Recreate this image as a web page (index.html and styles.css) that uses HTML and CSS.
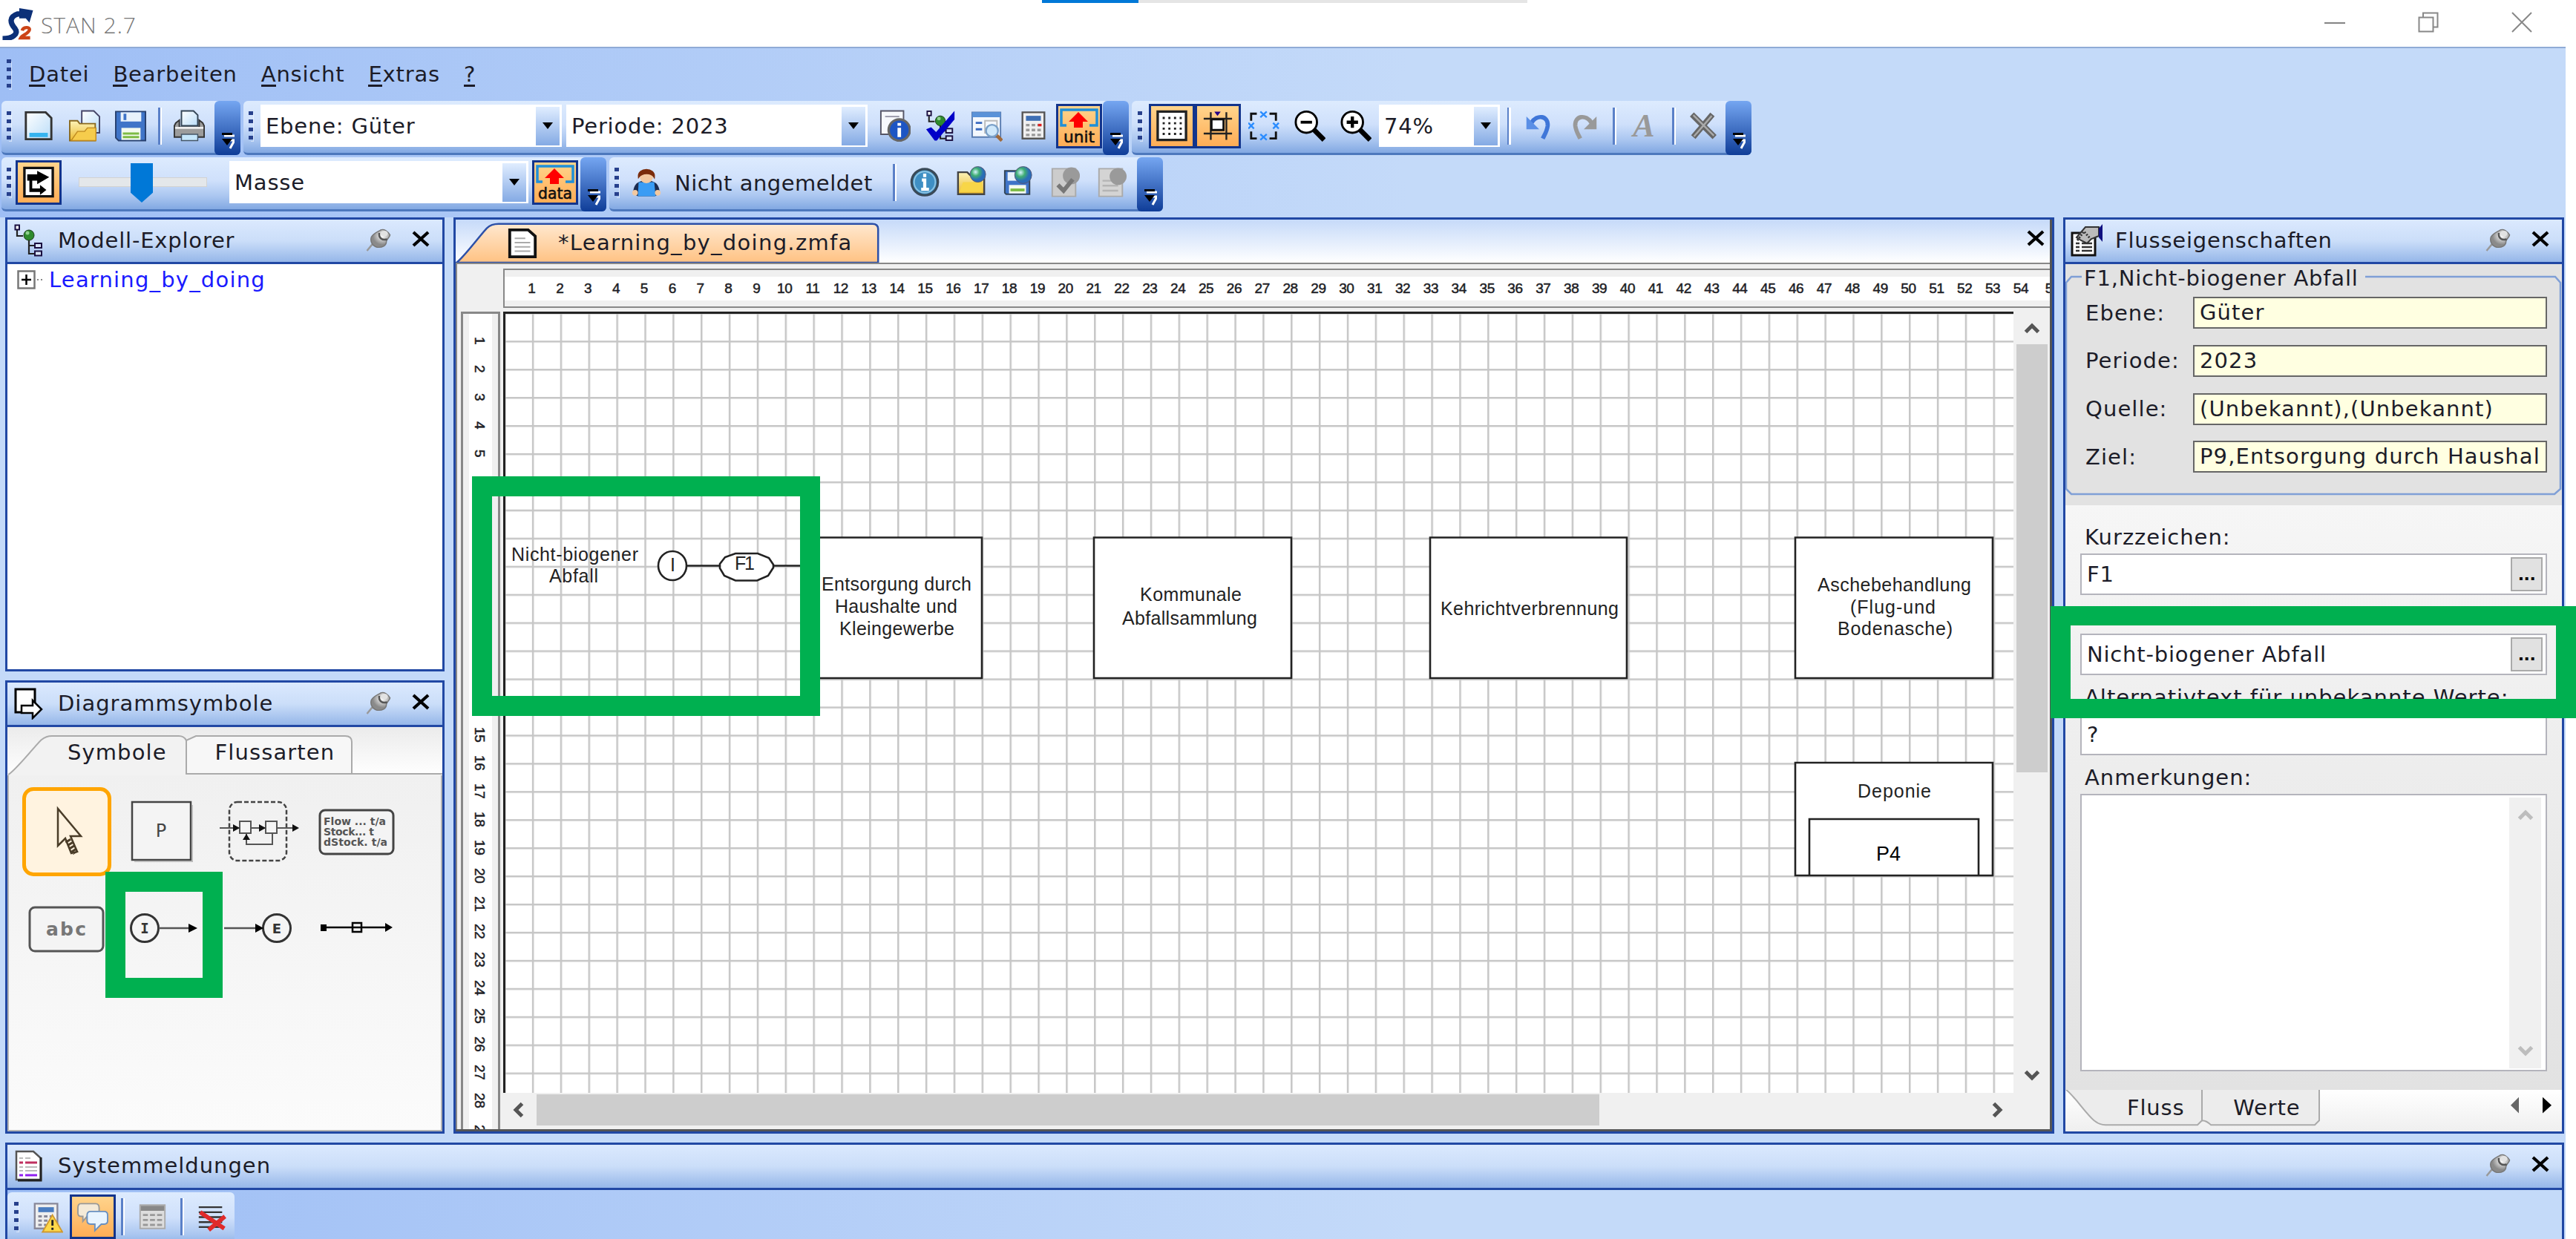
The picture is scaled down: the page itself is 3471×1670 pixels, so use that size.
FILE: index.html
```html
<!DOCTYPE html>
<html lang="de">
<head>
<meta charset="utf-8">
<title>STAN 2.7</title>
<link rel="stylesheet" href="styles.css">
</head>
<body>
<svg class="defs" width="0" height="0">
  <defs>
    <linearGradient id="paper" x1="0" y1="0" x2="1" y2="1"><stop offset="0" stop-color="#fff"/><stop offset="1" stop-color="#b9dcf8"/></linearGradient>
    <linearGradient id="gold" x1="0" y1="0" x2="0" y2="1"><stop offset="0" stop-color="#fdf3b8"/><stop offset="1" stop-color="#eab92c"/></linearGradient>
    <radialGradient id="globe" cx=".35" cy=".35"><stop offset="0" stop-color="#d5f3ff"/><stop offset=".5" stop-color="#3fae72"/><stop offset="1" stop-color="#2a6db8"/></radialGradient>
    <radialGradient id="silver" cx=".6" cy=".35"><stop offset="0" stop-color="#fff"/><stop offset="1" stop-color="#8a8a8a"/></radialGradient>
    <symbol id="pin" viewBox="0 0 34 32"><path d="M1 31L10 20" stroke="#999" stroke-width="2.500"/><path d="M7 12C10 6 18 4 20 2C25 0 30 4 33 9C32 13 29 14 28 18C28 24 22 27 15 26C9 25 5 18 7 12Z" fill="url(#silver)" stroke="#777" stroke-width="1.500"/><path d="M18 6C17 13 22 17 29 15" fill="none" stroke="#555" stroke-width="2.500"/><ellipse cx="25" cy="7" rx="5" ry="4" fill="#e2e2e2"/></symbol>
    <symbol id="close" viewBox="0 0 24 22"><path d="M2 2L22 20M22 2L2 20" stroke="#000" stroke-width="4.200"/></symbol>
    <symbol id="tree" viewBox="0 0 40 44"><path d="M4 8V16H12M20 20V40H28M20 29H28" fill="none" stroke="#222" stroke-width="2.200"/><rect x="1.500" y="1.500" width="5.500" height="6" fill="#fff" stroke="#1a0f40" stroke-width="2"/><circle cx="20" cy="15" r="7" fill="#2d8a2d" stroke="#1c3c1c"/><circle cx="18" cy="12" r="2.500" fill="#8fd08f"/><rect x="28" y="26" width="9" height="6" fill="#d8e4f8" stroke="#1a0f40" stroke-width="2"/><rect x="28" y="36.500" width="9" height="6" fill="#d8e4f8" stroke="#1a0f40" stroke-width="2"/></symbol>
    <symbol id="drop" viewBox="0 0 14 10"><path d="M0 0H14L7 9Z"/></symbol>
    <symbol id="over" viewBox="0 0 18 22"><path d="M4 4H18M8 10H18L12 21" fill="none" stroke="#fff" stroke-width="3"/><path d="M1 1.500H15" stroke="#000" stroke-width="3"/><path d="M1 8H15L8 17Z"/></symbol>
    <symbol id="chev" viewBox="0 0 22 18"><path d="M2.500 14.500L11 6L19.500 14.500" fill="none" stroke="currentColor" stroke-width="5"/></symbol>
  </defs>
</svg>

<div class="window">
  <header class="titlebar">
    <div class="progress"><i></i></div>
    <svg class="logo" viewBox="0 0 44 44"><path d="M1 42C14 42 24 36 18 28C11 20 10 12 22 8H26" fill="none" stroke="#0c3078" stroke-width="7.500"/><path d="M24 0L43 3L38 20L33 14L24 14Z" fill="#0c3078"/><path d="M28 31C29 26 39 25 38 30C37 35 28 37 26 41H39" fill="none" stroke="#cc4418" stroke-width="4.500"/></svg>
    <span class="app-name">STAN 2.7</span>
    <span class="spring"></span>
    <svg class="caption" viewBox="0 0 28 28"><path d="M0 15H28" stroke="#888" stroke-width="2.200"/></svg>
    <svg class="caption" viewBox="0 0 28 28"><path d="M1.500 7.500H20.500V26.500H1.500ZM7 7V1.500H26.500V20.500H21" fill="none" stroke="#888" stroke-width="2"/></svg>
    <svg class="caption last" viewBox="0 0 28 28"><path d="M1 1L27 27M27 1L1 27" stroke="#888" stroke-width="2"/></svg>
  </header>

  <div class="bars">
    <nav class="menu"><i class="grip"></i><span><u>D</u>atei</span><span><u>B</u>earbeiten</span><span><u>A</u>nsicht</span><span><u>E</u>xtras</span><span><u>?</u></span></nav>

    <div class="bar-row">
      <div class="bar b-file">
        <i class="grip"></i>
        <b class="slot"><svg viewBox="0 0 44 44"><path d="M4 3H32L40 11V41H4Z" fill="url(#paper)" stroke="#333" stroke-width="3"/><path d="M9 32H35V38H9Z" fill="#35b4f0"/></svg></b>
        <b class="slot"><svg viewBox="0 0 44 44"><path d="M18 1H35L43 9V32H18Z" fill="url(#paper)" stroke="#446" stroke-width="2"/><path d="M1 15H12L15 19H37V43H1Z" fill="url(#gold)" stroke="#8a6a20" stroke-width="2"/><path d="M3 43L12 30H22L26 25H38V43Z" fill="#f6cc4c" stroke="#c08a20" stroke-width="1.500"/></svg></b>
        <b class="slot"><svg viewBox="0 0 44 44"><path d="M1 2H43V43H5L1 39Z" fill="#3f74c8" stroke="#28406e" stroke-width="2"/><path d="M8 3H37V16H8Z" fill="#e9f2fb"/><path d="M14 5V14" stroke="#3f74c8" stroke-width="4"/><path d="M9 25H36V42H9Z" fill="#f4faef"/><path d="M11 33H34M11 38H34" stroke="#7dbb45" stroke-width="3"/></svg></b>
        <i class="sep"></i>
        <b class="slot"><svg viewBox="0 0 44 44"><path d="M11 1H28L34 7V22H11Z" fill="url(#paper)" stroke="#345" stroke-width="2"/><path d="M3 18L8 14V24H36V14L41 18L43 22V38H1V22Z" fill="#9c9c9c" stroke="#333" stroke-width="2"/><path d="M2 25H42" stroke="#eee" stroke-width="3"/><path d="M11 34H34V43H11Z" fill="#c5e6fb" stroke="#456" stroke-width="1.500"/></svg></b>
        <i class="cap"><svg><use href="#over"/></svg></i>
      </div>
      <div class="bar b-level">
        <i class="grip"></i>
        <div class="combo">Ebene: Güter<i><svg><use href="#drop"/></svg></i></div>
        <div class="combo">Periode: 2023<i><svg><use href="#drop"/></svg></i></div>
        <b class="slot"><svg viewBox="0 0 44 44"><path d="M2 1H34V34H2Z" fill="#f6f8fc" stroke="#556" stroke-width="2"/><path d="M8 9H28" stroke="#99a" stroke-width="2"/><circle cx="28" cy="28" r="15" fill="#1d55c4" stroke="#666" stroke-width="3.500"/><path d="M28 18V22M28 25V38" stroke="#fff" stroke-width="5"/></svg></b>
        <b class="slot"><svg viewBox="0 0 44 44"><use href="#tree" width="42" height="44"/><path d="M1 27L8 24L15 31L41 1V13L16 43H13Z" fill="#0000c8"/></svg></b>
        <b class="slot"><svg viewBox="0 0 44 44"><path d="M1 3H41V38H1Z" fill="#f4f8fd" stroke="#5a7cb0" stroke-width="2"/><path d="M1 3H41V10H1Z" fill="#5a92d8"/><path d="M6 18H15M6 27H15" stroke="#3a6ac0" stroke-width="3"/><path d="M19 15H36V32H19Z" fill="none" stroke="#bbb" stroke-width="2"/><path d="M35 35L43 43" stroke="#a06a3c" stroke-width="5"/><circle cx="29" cy="29" r="8.500" fill="#cfe8fb" stroke="#7aa0c8" stroke-width="2.500"/></svg></b>
        <b class="slot"><svg viewBox="0 0 44 44"><path d="M7 3H38V40H7Z" fill="#f0f0f0" stroke="#555" stroke-width="2.500"/><path d="M12 8H33V15H12Z" fill="#3d6fb4"/><path d="M12 21H34M12 28H34M12 35H34" stroke="#999" stroke-width="3.500" stroke-dasharray="5 3"/><path d="M29 21H34" stroke="#e02020" stroke-width="3.500"/></svg></b>
        <b class="slot on"><svg class="wide" viewBox="0 0 56 52"><path d="M11 25H4V4H52V25H42" fill="none" stroke="#2090d8" stroke-width="3.500"/><path d="M27 7L40 20H33V28H21V20H14Z" fill="#f00"/><text x="28" y="48" text-anchor="middle" textLength="42" lengthAdjust="spacingAndGlyphs">unit</text></svg></b>
        <i class="cap"><svg><use href="#over"/></svg></i>
      </div>
      <div class="bar b-view">
        <i class="grip"></i>
        <b class="slot on"><svg viewBox="0 0 44 44"><path d="M2 2H42V42H2Z" fill="#fff" stroke="#222" stroke-width="3.500"/><path d="M9 11H37M9 18.500H37M9 26H37M9 33.500H37" stroke="#222" stroke-width="3" stroke-dasharray="3 5"/></svg></b>
        <b class="slot on"><svg viewBox="0 0 44 44"><path d="M12 3V42M34 3V42M2 12H42M2 33H42" stroke="#222" stroke-width="2.500"/><path d="M13 13H30V28H13Z" fill="#fff" stroke="#111" stroke-width="3"/><path d="M17 2H26L21.500 8Z" fill="#208"/></svg></b>
        <b class="slot"><svg viewBox="0 0 44 44"><path d="M4 15V5H12M30 5H39V15M39 30V40H30M12 40H4V30" fill="none" stroke="#111" stroke-width="3"/><path d="M17 2L26 10M26 2L17 10M17 34L26 42M26 34L17 42M0 18L8 26M8 18L0 26M35 18L43 26M43 18L35 26" stroke="#2a8cff" stroke-width="2.500"/></svg></b>
        <b class="slot"><svg viewBox="0 0 44 44"><path d="M28 28L42 42" stroke="#000" stroke-width="7"/><circle cx="17" cy="17" r="15" fill="#fff" stroke="#000" stroke-width="3"/><path d="M9 17H25" stroke="#000" stroke-width="4"/></svg></b>
        <b class="slot"><svg viewBox="0 0 44 44"><path d="M28 28L42 42" stroke="#000" stroke-width="7"/><circle cx="17" cy="17" r="15" fill="#fff" stroke="#000" stroke-width="3"/><path d="M9 17H25M17 9V25" stroke="#000" stroke-width="4.500"/></svg></b>
        <div class="combo zoom">74%<i><svg><use href="#drop"/></svg></i></div>
        <i class="sep"></i>
        <b class="slot"><svg viewBox="0 0 44 44"><path d="M12 18C20 5 36 8 35 22C34 30 30 36 28 40" fill="none" stroke="#3f76d8" stroke-width="6"/><path d="M5 9V27H23Z" fill="#5a8fe6"/></svg></b>
        <b class="slot"><svg viewBox="0 0 44 44"><path d="M32 18C24 5 8 8 9 22C10 30 14 36 16 40" fill="none" stroke="#999" stroke-width="6"/><path d="M39 9V27H21Z" fill="#999"/></svg></b>
        <i class="sep"></i>
        <b class="slot fmt">A</b>
        <i class="sep"></i>
        <b class="slot"><svg viewBox="0 0 44 44"><path d="M6 6L38 38M35 6L8 38" stroke="#666" stroke-width="8"/><path d="M8 7L37 36M34 8L9 37" stroke="#aaa" stroke-width="2.500"/></svg></b>
        <i class="cap"><svg><use href="#over"/></svg></i>
      </div>
    </div>

    <div class="bar-row">
      <div class="bar b-flow">
        <i class="grip"></i>
        <b class="slot on"><svg viewBox="0 0 44 44"><path d="M2 2H42V42H2Z" fill="#fff" stroke="#111" stroke-width="3.500"/><path d="M6 11H20V6L37 15L20 25V20H13V31H24V26L33 33L24 40V36H9V20H6Z"/></svg></b>
        <div class="slider"><i></i></div>
        <div class="combo">Masse<i><svg><use href="#drop"/></svg></i></div>
        <b class="slot on"><svg class="wide" viewBox="0 0 56 52"><path d="M11 25H4V4H52V25H42" fill="none" stroke="#2090d8" stroke-width="3.500"/><path d="M27 7L40 20H33V28H21V20H14Z" fill="#f00"/><text x="28" y="48" text-anchor="middle" textLength="46" lengthAdjust="spacingAndGlyphs">data</text></svg></b>
        <i class="cap"><svg><use href="#over"/></svg></i>
      </div>
      <div class="bar b-user">
        <i class="grip"></i>
        <b class="slot"><svg viewBox="0 0 44 44"><path d="M3 38C4 24 10 20 22 20C34 20 40 24 41 38L34 42H10Z" fill="#1c2c50"/><path d="M11 22H33L35 42H10Z" fill="#3a9cf4"/><circle cx="22" cy="14" r="9.500" fill="#f2c8a0"/><path d="M11 15C9 1 35 1 33 15C29 8 16 8 11 15Z" fill="#7a2c0c" stroke="#7a2c0c" stroke-width="2"/><circle cx="6" cy="37" r="4" fill="#f2c8a0"/><circle cx="38" cy="37" r="4" fill="#f2c8a0"/></svg></b>
        <span class="login">Nicht angemeldet</span>
        <i class="sep"></i>
        <b class="slot"><svg viewBox="0 0 44 44"><circle cx="22" cy="22" r="18.500" fill="#3f8fc4" stroke="#3a4a58" stroke-width="3.500"/><circle cx="22" cy="22" r="15" fill="none" stroke="#8cc4e4" stroke-width="2"/><path d="M22 10V15M18 19H22V32M17 32H28" stroke="#fff" stroke-width="4.500" fill="none"/></svg></b>
        <b class="slot"><svg viewBox="0 0 44 44"><path d="M3 8H16L20 12H40V39H3Z" fill="url(#gold)" stroke="#444" stroke-width="2.500"/><path d="M5 36L10 22H24L28 18H37V36Z" fill="#f8d648"/><circle cx="31" cy="11" r="11" fill="url(#globe)" stroke="#557" stroke-width="1"/></svg></b>
        <b class="slot"><svg viewBox="0 0 44 44"><path d="M3 6H38V39H5L3 37Z" fill="#3f74c8" stroke="#345" stroke-width="2"/><path d="M7 8H33V20H7Z" fill="#e9f2fb"/><path d="M9 26H33V38H9Z" fill="#f4faef"/><path d="M11 33H31" stroke="#7dbb45" stroke-width="4"/><circle cx="29" cy="12" r="12" fill="url(#globe)" stroke="#557" stroke-width="1"/></svg></b>
        <b class="slot"><svg viewBox="0 0 44 44"><path d="M4 3H37V42H4Z" fill="#ccc" stroke="#aaa" stroke-width="2"/><circle cx="31" cy="13" r="12" fill="#9a9a9a"/><path d="M12 26L20 34L33 18" fill="none" stroke="#777" stroke-width="6"/></svg></b>
        <b class="slot"><svg viewBox="0 0 44 44"><path d="M4 3H37V42H4Z" fill="#d4d4d4" stroke="#aaa" stroke-width="2"/><path d="M9 20H31M9 27H31M9 34H31" stroke="#b4b4b4" stroke-width="2.500"/><circle cx="31" cy="14" r="12" fill="#9a9a9a"/></svg></b>
        <i class="cap"><svg><use href="#over"/></svg></i>
      </div>
    </div>
  </div>

  <main class="dock">
    <div class="left-col">
      <section class="panel explorer">
        <h2 class="head"><svg class="h-ic"><use href="#tree"/></svg><span>Modell-Explorer</span><svg class="pin"><use href="#pin"/></svg><svg class="x"><use href="#close"/></svg></h2>
        <div class="tree-row"><svg viewBox="0 0 38 26"><path d="M1.500 1.500H23.500V24.500H1.500Z" fill="#fff" stroke="#777" stroke-width="2.500"/><path d="M6 13H19M12.500 6V20" stroke="#000" stroke-width="2.500"/><path d="M27 13H36" stroke="#888" stroke-width="2" stroke-dasharray="2 3"/></svg><span>Learning_by_doing</span></div>
      </section>
      <section class="panel symbols">
        <h2 class="head"><svg class="h-ic" viewBox="0 0 40 44"><path d="M2 3H28V34H2Z" fill="#fff" stroke="#000" stroke-width="3"/><path d="M10 25H25V18L37 30L25 42V35H10Z" fill="#fff" stroke="#000" stroke-width="2.500"/></svg><span>Diagrammsymbole</span><svg class="pin"><use href="#pin"/></svg><svg class="x"><use href="#close"/></svg></h2>
        <div class="sym-tabs">
          <svg class="tab-line" viewBox="0 0 586 65" preserveAspectRatio="none"><path d="M1 64C10 60 38 24 46 17Q52 12 60 12H231Q238 12 241 17V64H586V65H1Z" fill="#f2f2f2"/><path d="M241 18L254 12H455Q464 12 464 20V63H241Z" fill="#f7f7f7"/><path d="M1 64C10 60 38 24 46 17Q52 12 60 12H231Q238 12 241 18V63H586M241 18L254 12H455Q464 12 464 20V63" fill="none" stroke="#aaa" stroke-width="2"/></svg>
          <span>Symbole</span><span>Flussarten</span>
        </div>
        <div class="palette">
          <b class="sym sel"><svg viewBox="0 0 112 110"><path d="M44 24V74L54 64L62 84L70 82L61 61H75Z" fill="#fff3e0" stroke="#4a3c28" stroke-width="2.500"/><path d="M57 66L68 84" stroke="#4a3c28" stroke-width="8" stroke-dasharray="3 2"/></svg></b>
          <b class="sym"><svg viewBox="0 0 118 118"><path d="M19 20H98V98H19Z" fill="#f4f4f4" stroke="#444" stroke-width="2.500"/><path d="M100 24V100H22" fill="none" stroke="#bbb" stroke-width="2"/><text x="58" y="67" text-anchor="middle" font-size="24" fill="#444">P</text></svg></b>
          <b class="sym"><svg viewBox="0 0 118 118"><rect x="18" y="20" width="77" height="79" rx="11" fill="none" stroke="#444" stroke-width="2.500" stroke-dasharray="6 3"/><path d="M5 55H110M41 62V77H76V62" fill="none" stroke="#555" stroke-width="2"/><path d="M32 46H47V62H32ZM67 46H82V62H67Z" fill="#f4f4f4" stroke="#555" stroke-width="2"/><path d="M23 50L32 55L23 60ZM58 50L67 55L58 60ZM103 50L112 55L103 60ZM36 71L41 63L46 71Z" fill="#111"/></svg></b>
          <b class="sym"><svg viewBox="0 0 118 118"><rect x="9" y="31" width="99" height="59" rx="7" fill="#f4f4f4" stroke="#444" stroke-width="3"/><g font-size="14" font-weight="bold" fill="#555"><text x="14" y="51" textLength="84">Flow ... t/a</text><text x="14" y="65" textLength="68">Stock... t</text><text x="14" y="79" textLength="86">dStock. t/a</text></g></svg></b>
          <b class="sym"><svg viewBox="0 0 118 118"><rect x="12" y="31" width="99" height="59" rx="7" fill="#f4f4f4" stroke="#555" stroke-width="3"/><text x="61" y="69" text-anchor="middle" textLength="54" font-size="25" font-weight="bold" fill="#777">abc</text></svg></b>
          <b class="sym"><svg viewBox="0 0 118 118"><circle cx="36" cy="59" r="18.500" fill="none" stroke="#333" stroke-width="3"/><path d="M55 59H100" stroke="#555" stroke-width="2.500"/><path d="M95 53L107 59L95 65Z"/><text class="mono" x="36" y="66" text-anchor="middle" font-size="19" font-weight="bold" fill="#333">I</text></svg></b>
          <b class="sym"><svg viewBox="0 0 118 118"><circle cx="82" cy="59" r="18.500" fill="none" stroke="#333" stroke-width="3"/><path d="M11 59H56" stroke="#555" stroke-width="2.500"/><path d="M53 53L64 59L53 65Z"/><text x="82" y="66" text-anchor="middle" font-size="18" font-weight="bold" fill="#333">E</text></svg></b>
          <b class="sym"><svg viewBox="0 0 118 118"><path d="M14 58H98" stroke="#000" stroke-width="2.500"/><path d="M10 54H18V63H10ZM97 52L107 58L97 64Z"/><path d="M53 52H65V64H53Z" fill="none" stroke="#000" stroke-width="2.500"/></svg></b>
        </div>
      </section>
    </div>

    <section class="panel document">
      <div class="doc-tabs">
        <svg class="tab-line" viewBox="0 0 2151 60" preserveAspectRatio="none"><defs><linearGradient id="tabfill" x1="0" y1="0" x2="0" y2="1"><stop offset="0" stop-color="#ffe8cf"/><stop offset="1" stop-color="#ffc283"/></linearGradient></defs><path d="M1 60C10 54 36 18 42 12Q48 6 58 6H562Q570 6 570 13V60Z" fill="url(#tabfill)" stroke="#2c50a8" stroke-width="2.500"/></svg>
        <svg class="doc-ic" viewBox="0 0 44 44"><path d="M4 3H30L40 12V41H4Z" fill="#fff" stroke="#111" stroke-width="4"/><path d="M11 15H26M11 21H33M11 27H33M11 33H33" stroke="#aaa" stroke-width="2"/></svg>
        <span>*Learning_by_doing.zmfa</span>
        <svg class="x"><use href="#close"/></svg>
      </div>
      <div class="sheet">
        <div class="h-ruler"><span>1</span><span>2</span><span>3</span><span>4</span><span>5</span><span>6</span><span>7</span><span>8</span><span>9</span><span>10</span><span>11</span><span>12</span><span>13</span><span>14</span><span>15</span><span>16</span><span>17</span><span>18</span><span>19</span><span>20</span><span>21</span><span>22</span><span>23</span><span>24</span><span>25</span><span>26</span><span>27</span><span>28</span><span>29</span><span>30</span><span>31</span><span>32</span><span>33</span><span>34</span><span>35</span><span>36</span><span>37</span><span>38</span><span>39</span><span>40</span><span>41</span><span>42</span><span>43</span><span>44</span><span>45</span><span>46</span><span>47</span><span>48</span><span>49</span><span>50</span><span>51</span><span>52</span><span>53</span><span>54</span><span class="cut">5</span></div>
        <div class="v-ruler"><span>1</span><span>2</span><span>3</span><span>4</span><span>5</span><span>6</span><span>7</span><span>8</span><span>9</span><span>10</span><span>11</span><span>12</span><span>13</span><span>14</span><span>15</span><span>16</span><span>17</span><span>18</span><span>19</span><span>20</span><span>21</span><span>22</span><span>23</span><span>24</span><span>25</span><span>26</span><span>27</span><span>28</span><span class="cut">2</span></div>
        <svg class="canvas" viewBox="679 421 2035 1053">
          <defs><pattern id="grid" patternUnits="userSpaceOnUse" x="680" y="422.200" width="37.860" height="37.940"><path d="M0 0H38M0 0V38" stroke="#c6c6c6" stroke-width="5"/></pattern></defs>
          <rect x="679" y="421" width="2035" height="1053" fill="#fff"/>
          <rect x="679" y="421" width="2035" height="1053" fill="url(#grid)"/>
          <path d="M680.500 1474V422.500H2714" fill="none" stroke="#222" stroke-width="3"/>
          <g fill="#fff" stroke="#222" stroke-width="2.600"><path d="M1096 725.500H1324V915H1096ZM1475 725.500H1741V915H1475ZM1928 725.500H2193V915H1928ZM2420 725.500H2686V915H2420ZM2420 1029H2686V1181H2420ZM2439 1105H2667V1181H2439Z"/>
          <path d="M926 763.500H1096"/><ellipse cx="907" cy="763.500" rx="19" ry="19.500"/><path d="M971 761L978 752L992 747H1022L1037 753L1043 762V766L1036 777L1021 783.500H992L977 777L971 767Z"/></g>
          <g class="names">
            <text x="690" y="757" textLength="171">Nicht-biogener</text><text x="741" y="786" textLength="66">Abfall</text>
            <text x="904" y="771">I</text><text x="991" y="769" textLength="27">F1</text>
            <text x="1108" y="797" textLength="202">Entsorgung durch</text><text x="1126" y="827" textLength="165">Haushalte und</text><text x="1132" y="857" textLength="155">Kleingewerbe</text>
            <text x="1537" y="811" textLength="137">Kommunale</text><text x="1513" y="843" textLength="182">Abfallsammlung</text>
            <text x="1942" y="830" textLength="240">Kehrichtverbrennung</text>
            <text x="2450" y="798" textLength="207">Aschebehandlung</text><text x="2494" y="828" textLength="115">(Flug-und</text><text x="2477" y="857" textLength="155">Bodenasche)</text>
            <text x="2504" y="1076" textLength="99">Deponie</text><text class="id" x="2529" y="1161" textLength="33">P4</text>
          </g>
        </svg>
        <div class="v-scroll"><svg><use href="#chev"/></svg><i></i><svg class="down"><use href="#chev"/></svg></div>
        <div class="h-scroll"><svg class="prev"><use href="#chev"/></svg><i></i><svg class="next"><use href="#chev"/></svg></div>
      </div>
    </section>

    <section class="panel props">
      <h2 class="head"><svg class="h-ic big" viewBox="0 0 46 44"><path d="M2 12H33V42H2Z" fill="#fff" stroke="#111" stroke-width="3"/><path d="M7 26H12M15 26H29M7 31H12M15 31H29M7 36H12M15 36H29" stroke="#333" stroke-width="2.500"/><path d="M8 18L20 4H38V16L28 20L22 26L14 22Z" fill="#bbb" stroke="#333" stroke-width="2"/><path d="M9 22L18 10L27 20" fill="none" stroke="#333" stroke-width="3" stroke-dasharray="2 2"/><path d="M43 0V24L38 18V6Z" fill="#101080"/></svg><span>Flusseigenschaften</span><svg class="pin"><use href="#pin"/></svg><svg class="x"><use href="#close"/></svg></h2>
      <div class="info">
        <svg class="frame" viewBox="0 0 669 325"><path d="M22 17H8L1 25V303L8 310H659L667 303V25L660 17H404" fill="none" stroke="#7f9fd6" stroke-width="2.500"/></svg>
        <h3>F1,Nicht-biogener Abfall</h3>
        <label>Ebene:<output>Güter</output></label>
        <label>Periode:<output>2023</output></label>
        <label>Quelle:<output>(Unbekannt),(Unbekannt)</output></label>
        <label>Ziel:<output>P9,Entsorgung durch Haushal</output></label>
      </div>
      <div class="form">
        <span class="l1">Kurzzeichen:</span><div class="input">F1<b>...</b></div>
        <span class="l2">Name:</span><div class="input">Nicht-biogener Abfall<b>...</b></div>
        <span>Alternativtext für unbekannte Werte:</span><div class="input">?</div>
        <span>Anmerkungen:</span><div class="notes"><div><svg><use href="#chev"/></svg><svg class="down"><use href="#chev"/></svg></div></div>
      </div>
      <div class="prop-tabs">
        <svg class="tab-line" viewBox="0 0 669 57" preserveAspectRatio="none"><path d="M1 0C12 10 34 44 46 47L54 48H178L184 42V0ZM184 42L196 48H336L342 42V0H184Z" fill="#ececec"/><path d="M1 0C12 8 30 36 40 43Q46 48 54 48H178L184 42V0M184 42Q190 42 196 48H336L342 42V0" fill="none" stroke="#aaa" stroke-width="2"/><path d="M611 10V32L600 21Z" fill="#666"/><path d="M643 10V32L655 21Z"/></svg>
        <span>Fluss</span><span>Werte</span>
      </div>
    </section>
  </main>

  <section class="panel messages">
    <h2 class="head"><svg class="h-ic" viewBox="0 0 40 44"><path d="M3 3H26L36 12V41H3Z" fill="#fff" stroke="#555" stroke-width="2.500"/><path d="M36 11V42H5" fill="none" stroke="#222" stroke-width="3"/><path d="M7 18H12M15 18H31" stroke="#c03060" stroke-width="3"/><path d="M7 24H12M15 24H31M7 29H12M15 29H31M7 12H12M15 12H22" stroke="#bbb" stroke-width="2"/><path d="M7 35H12M15 35H31" stroke="#9020f0" stroke-width="3"/></svg><span>Systemmeldungen</span><svg class="pin"><use href="#pin"/></svg><svg class="x"><use href="#close"/></svg></h2>
    <div class="msg-area">
      <div class="bar">
        <i class="grip"></i>
        <b class="slot"><svg viewBox="0 0 44 44"><path d="M4 3H36V38H4Z" fill="#eee" stroke="#889" stroke-width="2.500"/><path d="M9 8H31V15H9Z" fill="#4a7cc0"/><path d="M9 21H31M9 27H25M9 33H20" stroke="#889" stroke-width="3" stroke-dasharray="5 3"/><path d="M29 19L43 43H15Z" fill="#ffd84a" stroke="#d09a30" stroke-width="2"/><path d="M29 26V34M29 37V40" stroke="#222" stroke-width="3"/></svg></b>
        <b class="slot on"><svg viewBox="0 0 44 44"><path d="M5 3H26Q31 3 31 9V16Q31 21 26 21H14L8 28V21H5Q1 21 1 16V9Q1 3 5 3Z" fill="#f4ead8" stroke="#999" stroke-width="2"/><path d="M19 14H38Q43 14 43 19V27Q43 32 38 32H34L25 41V32H19Q14 32 14 27V19Q14 14 19 14Z" fill="#e8f4ff" stroke="#6a90c0" stroke-width="2"/></svg></b>
        <i class="sep"></i>
        <b class="slot"><svg viewBox="0 0 44 44"><path d="M5 5H40V38H5Z" fill="#ddd" stroke="#aaa" stroke-width="2"/><path d="M6 6H39V13H6Z" fill="#888"/><path d="M9 19H36M9 26H36M9 33H36" stroke="#999" stroke-width="3" stroke-dasharray="7 3"/></svg></b>
        <i class="sep"></i>
        <b class="slot"><svg viewBox="0 0 44 44"><path d="M4 8H37M4 15H37M4 22H37M4 29H37M4 36H37" stroke="#333" stroke-width="2.500"/><path d="M6 15L40 38M41 21L18 40" stroke="#e02a2a" stroke-width="6"/></svg></b>
      </div>
    </div>
  </section>
</div>

<i class="mark mark-flow"></i>
<i class="mark mark-import"></i>
<i class="mark mark-name"></i>
</body>
</html>
```

FILE: styles.css
```css
* { box-sizing: border-box; }

body {
  margin: 0;
  width: 3471px;
  height: 1670px;
  overflow: hidden;
  position: relative;
  background: #fff;
  font: 29px/34px "DejaVu Sans", sans-serif;
  letter-spacing: .8px;
  color: #1c1c28;
}

i, b { font-style: normal; font-weight: normal; }
svg { display: block; flex: none; }
.defs { position: absolute; }
.window { width: 3457px; height: 1670px; overflow: hidden; display: flex; flex-direction: column; }
.spring { flex: 1; }

/* title bar */
.titlebar { position: relative; height: 63px; flex: none; display: flex; align-items: center; padding: 0 45px 0 2px; background: #fff; }
.progress { position: absolute; left: 1404px; top: 0; width: 654px; height: 4px; background: #e5e5e5; }
.progress i { display: block; width: 130px; height: 4px; background: #0078d7; }
.logo { width: 44px; height: 43px; margin-top: 2px; }
.app-name { font: 300 30px/40px "Open Sans", "Noto Sans", sans-serif; letter-spacing: 1px; color: #777; margin: 4px 0 0 9px; }
.caption { width: 28px; height: 28px; margin: -4px 0 0 98px; }

/* menu and toolbars */
.bars { height: 230px; flex: none; border-top: 2px solid #90abd6; background: linear-gradient(90deg, #9ebef5, #c4daf9 1900px); display: flex; flex-direction: column; }
.menu { height: 71px; display: flex; align-items: center; flex: none; padding-bottom: 2px; }
.menu span { margin-right: 32px; }
.menu u { text-decoration: none; box-shadow: 0 -1px 0 #1c1c28 inset, 0 2px 0 #1c1c28; display: inline-block; height: 32px; line-height: 34px; letter-spacing: 0; margin-right: .8px; }
.grip { flex: none; width: 6px; height: 40px; margin: 0 14px 0 9px; background: repeating-linear-gradient(180deg, #27408c 0 5px, transparent 5px 11px); box-shadow: 2px 2px 0 -1px rgba(255,255,255,.5); }
.menu .grip { margin-right: 24px; }
.bar-row { height: 73px; margin-bottom: 3px; display: flex; gap: 4px; padding-left: 2px; flex: none; }
.bar { position: relative; display: flex; align-items: center; padding-bottom: 3px; border-radius: 6px; border-bottom: 3px solid #4d78bd; background: linear-gradient(180deg, #ddebfe, #cfe0fb 45%, #aac6f0 75%, #82a8e2); }
.bar .grip { margin: 0 8px 0 7px; }
.b-file .grip { margin-right: 6px; }
.b-file .sep { margin: 0 6px; }
.slot { width: 62px; height: 60px; display: flex; align-items: center; justify-content: center; flex: none; }
.slot svg { width: 42px; height: 43px; }
.slot svg.wide { width: 56px; height: 52px; overflow: visible; }
.slot text { font: 22px "DejaVu Sans", sans-serif; letter-spacing: 0; fill: #111; stroke: #111; stroke-width: .6; }
.slot.fmt { font: italic bold 44px/50px "Liberation Serif", serif; letter-spacing: 0; color: #999; }
.slot.on { border: 3px solid #12348c; background: linear-gradient(180deg, #ffd48c, #ffad56); }
.sep { flex: none; width: 5px; height: 50px; margin: 0 6.500px; background: linear-gradient(90deg, #5a80c8 2.500px, #fff 2.500px); }
.cap { width: 35px; align-self: stretch; margin: 0 0 -6px 3px; border-radius: 6px; background: linear-gradient(180deg, #75a6f1, #0f3d98); display: flex; align-items: flex-end; justify-content: center; padding-bottom: 8px; }
.cap svg { width: 18px; height: 22px; }
.combo { height: 57px; width: 406px; flex: none; display: flex; align-items: center; justify-content: space-between; background: #fff; padding: 0 3px 0 7px; margin-right: 6px; }
.combo i { width: 32px; height: 52px; display: flex; align-items: center; justify-content: center; background: linear-gradient(180deg, #e0edff, #84aae4); }
.combo svg { width: 14px; height: 10px; }
.b-level .grip { margin-right: 10px; }
.b-level .cap { margin-left: 1px; }
.b-view .grip { margin-left: 8px; margin-right: 9px; }
.b-view .cap { margin-left: -1px; }
.zoom { width: 163px; margin: 0 3px 0 0; }
.b-flow .grip { margin-right: 6px; }
.b-flow .combo { width: 403px; margin-right: 5px; }
.slider { position: relative; width: 173px; height: 13px; margin: 0 30px 0 23px; background: #e4e7ea; border: 1px solid #d2d2d2; }
.slider i { position: absolute; left: 69px; top: -20px; width: 30px; height: 53px; background: #0078d7; clip-path: polygon(0 0, 100% 0, 100% 75%, 50% 100%, 0 75%); }
.b-user .grip { margin-left: 7px; margin-right: 5px; }
.b-user .slot { width: 63px; }
.login { width: 278px; margin: 0 9px 0 7px; white-space: nowrap; letter-spacing: .5px; padding-top: 2px; }

/* docked panels */
.dock { height: 1235px; flex: none; display: grid; grid-template-columns: 592px 2157px 675px; gap: 12px; padding-left: 7px; background: #c4daf9; }
.left-col { display: flex; flex-direction: column; gap: 12px; }
.panel { border: 3px solid #2148a4; background: #fff; display: flex; flex-direction: column; overflow: hidden; min-width: 0; }
.explorer { height: 612px; flex: none; }
.symbols { flex: 1; background: #f3f3f3; }
.head { height: 60px; flex: none; margin: 0; display: flex; align-items: center; border-bottom: 3px solid #2148a4; background: linear-gradient(180deg, #dbe9fe, #cbdef9 50%, #96b7e9); font: inherit; padding: 0 17px 2px 9px; }
.head span { flex: 1; white-space: nowrap; }
.h-ic { width: 40px; height: 44px; margin-right: 19px; }
.h-ic.big { width: 46px; margin: 0 14px 0 -2px; }
.pin { width: 34px; height: 31px; margin-right: 28px; }
.x { width: 24px; height: 22px; margin-top: -3px; }
.tree-row { display: flex; align-items: center; height: 42px; color: #1a1aff; padding-left: 13px; letter-spacing: 1.2px; }
.tree-row svg { width: 38px; height: 26px; margin-right: 5px; }
.symbols .head span, .messages .head span { letter-spacing: 1px; }

.tab-line { position: absolute; left: 0; top: 0; width: 100%; height: 100%; }
.sym-tabs { position: relative; height: 65px; flex: none; background: linear-gradient(180deg, #ebebeb, #fff); display: flex; padding: 17px 0 0 81px; gap: 65px; letter-spacing: 1.1px; }
.sym-tabs span { position: relative; }
.palette { flex: 1; display: grid; grid-template-columns: repeat(4, 131.300px); grid-template-rows: 131px 131px; align-content: start; padding: 9px 0 0 10px; background: linear-gradient(180deg, #f0f0f0, #fbfbfb); border: 2px solid #b4b4b4; border-top: 0; }
.sym { width: 130px; height: 131px; display: flex; align-items: center; justify-content: center; }
.sym svg { width: 118px; height: 118px; }
.sym text { letter-spacing: 0; }
.sym .mono { font-family: "DejaVu Sans Mono", monospace; }
.sel { width: 120px; height: 120px; margin: 7px 8px; border: 5px solid #ffa500; border-radius: 15px; background: #fff3e0; }
.sel svg { width: 112px; height: 110px; }

/* document area */
.document { box-shadow: inset -3px 0 0 #555, inset 0 -3px 0 #555; padding-right: 3px; padding-bottom: 3px; }
.doc-tabs { position: relative; height: 60px; flex: none; display: flex; align-items: center; padding: 10px 7px 0 69px; background: linear-gradient(180deg, #c6daf9, #fff); border-bottom: 2px solid #888; }
.doc-tabs > :not(.tab-line) { position: relative; }
.doc-ic { width: 42px; height: 44px; margin: -4px 27px 0 0; }
.doc-tabs span { flex: 1; margin-top: -6px; letter-spacing: 1.300px; }
.doc-tabs .x { margin-top: -18px; }
.sheet { flex: 1; min-height: 0; display: grid; grid-template-columns: 53px 2035px 46px; grid-template-rows: 53px 1053px 44px; column-gap: 4px; row-gap: 5px; padding: 6px 0 0 5px; background: #f0f0f0; border-left: 2px solid #888; overflow: hidden; justify-content: start; font: 19px/20px "Liberation Sans", Arial, sans-serif; letter-spacing: -.4px; -webkit-text-stroke: .5px #222; }
.h-ruler { grid-column: 2 / 4; display: flex; align-items: center; padding: 0 0 0 17.500px; border: 2px solid #888; border-right: 0; overflow: hidden; background: linear-gradient(180deg, #f0f0f0 9px, #fff 9px 41px, #f0f0f0 41px); }
.h-ruler span { flex: 0 0 37.860px; text-align: center; }
.v-ruler { grid-row: 2 / 4; display: flex; flex-direction: column; align-items: center; padding: 17px 4px 0 0; border: 3px solid #888; border-bottom: 0; overflow: hidden; background: linear-gradient(90deg, #f0f0f0 8px, #fff 8px 39px, #f0f0f0 39px); }
.v-ruler span { flex: 0 0 37.940px; writing-mode: vertical-rl; text-align: center; }
.canvas { width: 2035px; height: 1053px; }
.names { font-size: 25px; fill: #222; letter-spacing: 0; -webkit-text-stroke: 0; }
.names .id { font-size: 27px; fill: #000; }
.v-scroll { width: 42px; height: 1053px; background: #f0f0f0; display: flex; flex-direction: column; align-items: center; color: #555; padding-top: 13px; }
.v-scroll svg { width: 22px; height: 18px; }
.v-scroll i { width: 42px; height: 577px; margin: 13px 0 400px; background: #cdcdcd; flex: none; }
.down { transform: rotate(180deg); }
.h-scroll { height: 42px; grid-column: 2; margin-top: -3px; background: #f0f0f0; display: flex; align-items: center; color: #555; padding-left: 9px; }
.h-scroll svg { width: 22px; height: 18px; transform: rotate(-90deg); }
.h-scroll i { width: 1432px; height: 42px; margin: 0 526px 0 14px; background: #cdcdcd; flex: none; }
.h-scroll .next { transform: rotate(90deg); }

/* flow properties */
.info { position: relative; height: 325px; flex: none; background: #e2e2e2; padding: 2px 20px 0 27px; letter-spacing: 1.1px; }
.frame { position: absolute; left: 0; top: 0; width: 669px; height: 325px; }
.info h3 { position: relative; font: inherit; letter-spacing: .8px; margin: 0 0 8px -2px; height: 34px; white-space: nowrap; }
.info label { position: relative; display: flex; align-items: center; justify-content: space-between; height: 43px; margin-bottom: 21.800px; }
.info output { width: 477px; height: 43px; line-height: 38px; padding-left: 7px; border: 2.500px solid #666; background: #ffffe1; white-space: nowrap; overflow: hidden; }
.form { flex: none; height: 788px; padding: 25px 20px 0; background: linear-gradient(180deg, #f6f6f6, #e2e2e2); }
.form > span { display: block; height: 34px; margin: 0 0 5px 6px; white-space: nowrap; letter-spacing: 1px; }
.form .l1 { padding-top: 2px; margin-top: -1px; margin-bottom: 7px; }
.form .l2 { margin-top: -2px; margin-bottom: 7px; }
.input { height: 56px; margin-bottom: 13px; border: 2.500px solid #b4b4bc; background: #fff; padding: 0 4px 0 7px; display: flex; align-items: center; justify-content: space-between; line-height: 46px; }
.input b { width: 43px; height: 46px; border: 2px solid #aaa; background: #e1e1e1; color: #000; font-weight: bold; font-size: 22px; letter-spacing: -.5px; line-height: 44px; text-align: center; }
.notes { height: 374px; border: 2.500px solid #b4b4bc; background: #fff; padding: 3px 6px 2px; display: flex; justify-content: flex-end; }
.notes div { width: 43px; background: #f0f0f0; color: #bdbdbd; display: flex; flex-direction: column; justify-content: space-between; align-items: center; padding: 14px 0; }
.notes svg { width: 22px; height: 18px; }
.prop-tabs { position: relative; flex: 1; background: linear-gradient(180deg, #fff, #efefef); display: flex; padding: 7px 0 0 83px; gap: 66px; }
.prop-tabs span { position: relative; }

/* messages */
.messages { width: 3448px; height: 142px; margin: 12px 0 0 7px; flex: none; position: relative; background: #c4daf9; outline: 12px solid #c4daf9; }
.messages .head { height: 61px; padding-bottom: 3px; }
.msg-area { flex: 1; background: linear-gradient(90deg, #9ebef5, #c4daf9 1900px); padding-top: 3px; }
.messages .bar { width: 306px; height: 76px; border-bottom: 0; padding: 0 0 10px; }
.messages .bar .grip { margin: 0 9px 0 9px; }
.messages .slot:nth-child(2) { width: 60px; }
.messages .sep { margin: 0 6px 0 7px; }

/* highlight frames */
.mark { position: absolute; border: 27px solid #00b050; }
.mark-flow { left: 636px; top: 642px; width: 469px; height: 323px; }
.mark-import { left: 142px; top: 1175px; width: 158px; height: 170px; }
.mark-name { left: 2763px; top: 817px; width: 708px; height: 151px; border-width: 26px 27px; }
```
